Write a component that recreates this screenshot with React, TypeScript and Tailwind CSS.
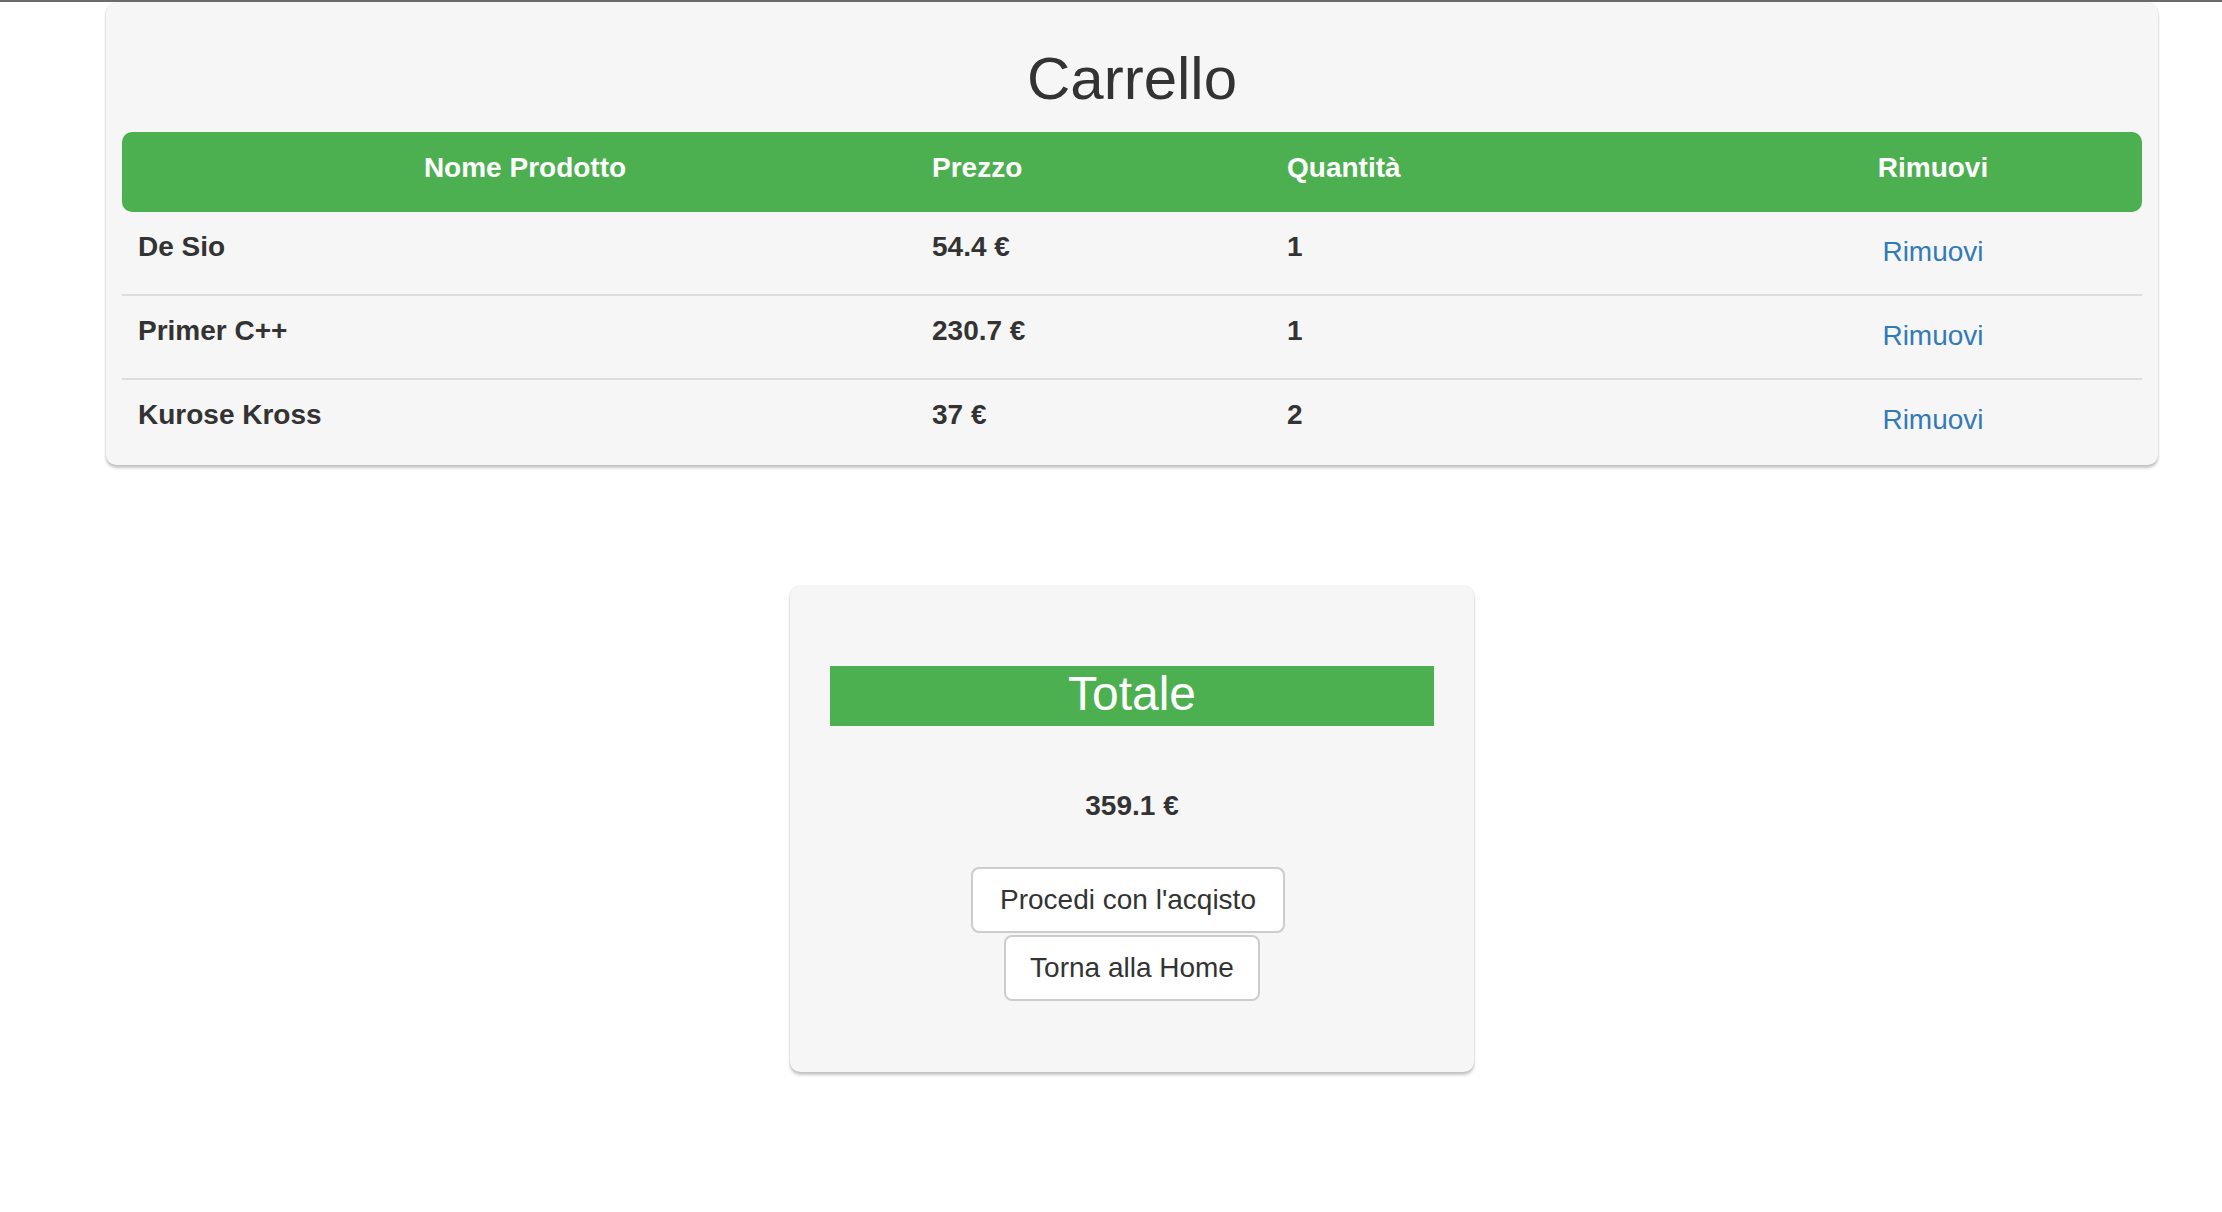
import React from "react";

const rows = [
  { name: "De Sio", price: "54.4 €", qty: "1", first: true },
  { name: "Primer C++", price: "230.7 €", qty: "1" },
  { name: "Kurose Kross", price: "37 €", qty: "2", last: true },
];

const cardShadow =
  "shadow-[0_3px_3px_0_rgba(0,0,0,0.22),0_0_2px_0_rgba(0,0,0,0.14)]";

export default function App() {
  return (
    <div
      className="min-h-[1212px] w-[2222px] bg-white text-[#333]"
      style={{ fontFamily: '"Liberation Sans", Arial, Helvetica, sans-serif' }}
    >
      <div className="h-[2px] bg-[#6a6a66]" />
      <div className="ml-[106px] w-[2052px]">
        {/* Cart card */}
        <div
          className={`mt-[1px] rounded-[10px] bg-[#f6f6f6] px-4 pt-[43px] pb-[3px] ${cardShadow}`}
        >
          <h1 className="mb-[20px] text-center text-[60px] leading-[66px] font-normal">
            Carrello
          </h1>
          <div className="w-[2020px]">
            <div className="grid h-[80px] grid-cols-[794px_355px_453px_418px] rounded-[10px] bg-[#4caf50] text-[28px] leading-[40px] font-bold text-white">
              <div className="pt-4 pr-4 pl-[28px] text-center">Nome Prodotto</div>
              <div className="pt-4 pl-4">Prezzo</div>
              <div className="pt-4 pl-4">Quantità</div>
              <div className="pt-4 text-center">Rimuovi</div>
            </div>
            {rows.map((r) => (
              <div
                key={r.name}
                className={`grid grid-cols-[794px_355px_453px_418px] text-[28px] leading-[40px] ${
                  r.last ? "h-[82px]" : "h-[84px] border-b-2 border-[#dddddd]"
                }`}
              >
                <div className="pt-[15px] pl-4 font-bold">{r.name}</div>
                <div className="pt-[15px] pl-4 font-bold">{r.price}</div>
                <div className="pt-[15px] pl-4 font-bold">{r.qty}</div>
                <div className="pt-[20px] text-center">
                  <a href="#" className="text-[#337ab7]">
                    Rimuovi
                  </a>
                </div>
              </div>
            ))}
          </div>
        </div>

        {/* Total card */}
        <div
          className={`mx-auto mt-[121px] w-[684px] rounded-[10px] bg-[#f6f6f6] px-[40px] pt-[80px] pb-[71px] ${cardShadow}`}
        >
          <div className="h-[60px] bg-[#4caf50] text-center text-[48px] leading-[56px] text-white">
            Totale
          </div>
          <div className="mt-[60px] text-center text-[28px] leading-[40px] font-bold">
            359.1 €
          </div>
          <div className="mt-[41px] flex flex-col items-center gap-[2px]">
            <button className="mr-[8px] rounded-[8px] border-2 border-[#cccccc] bg-white px-[27px] py-[11px] text-[28px] leading-[40px] text-[#333]">
              Procedi con l'acqisto
            </button>
            <button className="rounded-[8px] border-2 border-[#cccccc] bg-white px-6 py-[11px] text-[28px] leading-[40px] text-[#333]">
              Torna alla Home
            </button>
          </div>
        </div>
      </div>
    </div>
  );
}
